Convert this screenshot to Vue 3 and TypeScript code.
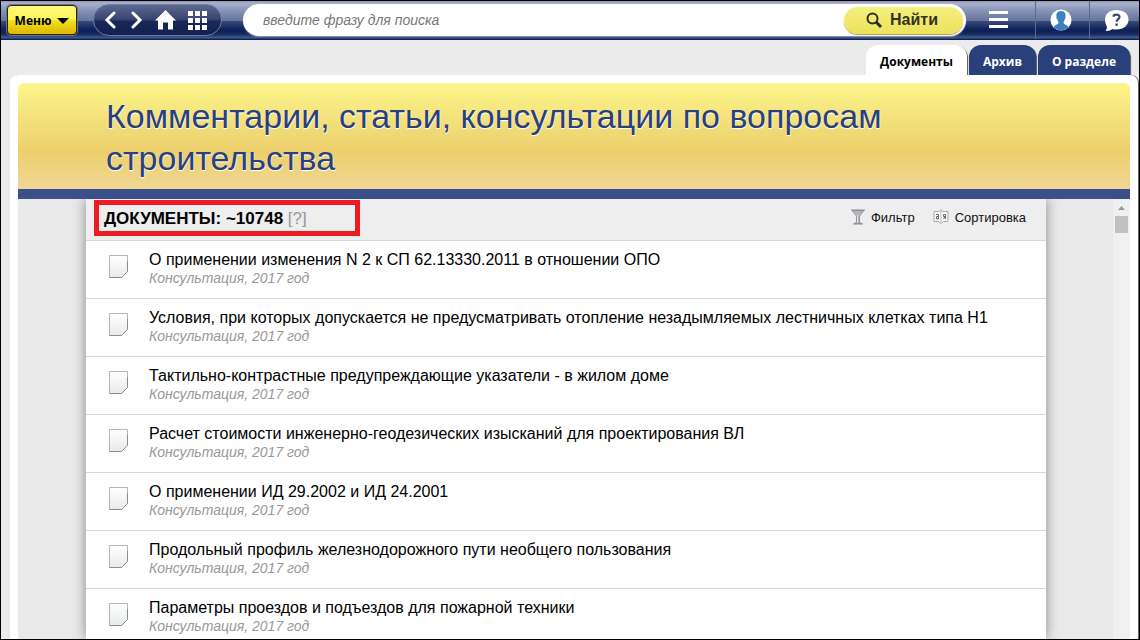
<script setup lang="ts">
import { ref } from 'vue'

interface Doc {
  title: string
  note: string
}

const query = ref('')
const tabs: string[] = ['Документы', 'Архив', 'О разделе']
const activeTab = ref(0)
const note = 'Консультация, 2017 год'
const docs: Doc[] = [
  'О применении изменения N 2 к СП 62.13330.2011 в отношении ОПО',
  'Условия, при которых допускается не предусматривать отопление незадымляемых лестничных клетках типа Н1',
  'Тактильно-контрастные предупреждающие указатели - в жилом доме',
  'Расчет стоимости инженерно-геодезических изысканий для проектирования ВЛ',
  'О применении ИД 29.2002 и ИД 24.2001',
  'Продольный профиль железнодорожного пути необщего пользования',
  'Параметры проездов и подъездов для пожарной техники',
].map((title) => ({ title, note }))
</script>

<template>
  <div class="app">
    <header class="topbar">
      <button class="menu" type="button">
        Меню
        <svg width="12" height="7" viewBox="0 0 12 7" aria-hidden="true"><path d="M0 1H12L6 7Z" fill="#000" /></svg>
      </button>
      <nav class="pill" aria-label="Навигация">
        <button type="button" aria-label="Назад">
          <svg width="12" height="18" viewBox="0 0 12 18"><path d="M10 2L3 9L10 16" fill="none" stroke="#fff" stroke-width="3" stroke-linecap="round" /></svg>
        </button>
        <button type="button" aria-label="Вперёд">
          <svg width="12" height="18" viewBox="0 0 12 18"><path d="M2 2L9 9L2 16" fill="none" stroke="#fff" stroke-width="3" stroke-linecap="round" /></svg>
        </button>
        <button type="button" aria-label="Домой">
          <svg width="21" height="20" viewBox="0 0 21 20"><path d="M10.500 0L21 10.500H18V19.500H13V12.500H8V19.500H3V10.500H0Z" fill="#fff" /></svg>
        </button>
        <button type="button" aria-label="Разделы">
          <svg width="19" height="19" viewBox="0 0 19 19"><path d="M0 0h5v5H0zM7 0h5v5H7zM14 0h5v5h-5zM0 7h5v5H0zM7 7h5v5H7zM14 7h5v5h-5zM0 14h5v5H0zM7 14h5v5H7zM14 14h5v5h-5z" fill="#fff" /></svg>
        </button>
      </nav>
      <form class="search" role="search" @submit.prevent>
        <input v-model="query" type="text" aria-label="Поиск" placeholder="введите фразу для поиска" />
        <button type="submit" class="find">
          <svg width="17" height="17" viewBox="0 0 17 17" aria-hidden="true"><circle cx="6.500" cy="6.500" r="5" fill="none" stroke="#2c2c20" stroke-width="2" /><path d="M10 10L15 15" stroke="#2c2c20" stroke-width="3" /></svg>
          Найти
        </button>
      </form>
      <div class="tools">
        <button type="button" aria-label="Список">
          <svg width="19" height="18" viewBox="0 0 19 18"><path d="M0 0h19v3H0zM0 7h19v3H0zM0 14h19v3H0z" fill="#fff" /></svg>
        </button>
        <button type="button" aria-label="Профиль">
          <svg width="22" height="22" viewBox="0 0 22 22"><circle cx="11" cy="11" r="10.500" fill="#fff" /><path d="M11 2C7 2 6 5 6.500 8C6.200 9 6.800 10.200 7.400 10.600C7.800 12 8.500 13 8.500 14C8 15.500 5 16 3.300 18Q6.500 21.300 11 21.300T18.700 18C17 16 14 15.500 13.500 14C13.500 13 14.200 12 14.600 10.600C15.200 10.200 15.800 9 15.500 8C16 5 15 2 11 2Z" fill="#3b80bf" /></svg>
        </button>
        <button type="button" aria-label="Справка">
          <svg width="25" height="23" viewBox="0 0 25 23"><path d="M12.500 1C5.500 1 1 5 1 10.500C1 14 2.500 16.500 3 18Q3 20.500 1.500 22Q6 22.300 8.500 20Q10 20.500 12.500 20.500C19.500 20.500 24.500 16.500 24.500 10.500S19.500 1 12.500 1Z" fill="#fff" /><path d="M9.500 7.800C9.500 4.900 15.500 4.700 15.500 8C15.500 10 12.600 10.300 12.600 12.800" fill="none" stroke="#3d4972" stroke-width="2.200" /><path d="M11.400 14.500h2.400v2.400h-2.400z" fill="#3d4972" /></svg>
        </button>
      </div>
    </header>

    <nav class="tabs" role="tablist">
      <button
        v-for="(tab, i) in tabs"
        :key="tab"
        type="button"
        role="tab"
        class="tab"
        :class="{ active: i === activeTab }"
        :aria-selected="i === activeTab"
        @click="activeTab = i"
      >
        {{ tab }}
      </button>
    </nav>

    <main class="panel">
      <div class="banner">
        <h1>Комментарии, статьи, консультации по вопросам строительства</h1>
      </div>
      <div class="body">
        <section class="sheet">
          <div class="listhead">
            <h2>ДОКУМЕНТЫ: ~10748 <a href="#">[?]</a></h2>
            <div class="actions">
              <button type="button">
                <svg width="14" height="16" viewBox="0 0 14 16" aria-hidden="true"><path d="M1 1.500L5.500 7V13.500L3 14.500H11L8.500 13.500V7L13 1.500Z" fill="#b4b4ba" stroke="#97979b" /><path d="M0 1h14M2 15h10" stroke="#88888c" /><path d="M6.500 6v8" stroke="#e6e6ea" /></svg>
                Фильтр
              </button>
              <button type="button">
                <svg width="16" height="16" viewBox="0 0 16 16" aria-hidden="true"><path d="M1 2.500H6L8 .8L10 2.500H15V12.500H10L8 14.800L6 12.500H1Z" fill="#f8f8f8" stroke="#aaa" /><path d="M8 2v11" stroke="#bbb" /><path d="M3 5.500h2.500V10H3.500V7.500H5.500M12.500 10V5.500H10.500V7.500H12.500M12 7.500L10.500 10" fill="none" stroke="#666" /></svg>
                Сортировка
              </button>
            </div>
          </div>
          <ul>
            <li v-for="doc in docs" :key="doc.title">
              <svg class="page" width="20" height="24" viewBox="0 0 20 24" aria-hidden="true">
                <defs><linearGradient id="paper" x1="0" y1="0" x2="0" y2="1"><stop offset="0" stop-color="#fff" /><stop offset="1" stop-color="#e8eaea" /></linearGradient></defs>
                <path d="M.5 .5H18.500V16.500L12.500 22.500H.5Z" fill="url(#paper)" stroke="#b5b5b5" />
                <path d="M18.500 6V16.500L12.500 22.500H.5" fill="none" stroke="#8c8c8c" />
              </svg>
              <div class="text">
                <a href="#">{{ doc.title }}</a>
                <p>{{ doc.note }}</p>
              </div>
            </li>
          </ul>
        </section>
        <div class="scroll" aria-hidden="true">
          <svg width="7" height="4" viewBox="0 0 7 4"><path d="M3.500 0L7 4H0Z" fill="#999" /></svg>
          <div class="thumb"></div>
        </div>
      </div>
    </main>
  </div>
</template>

<style>
body {
  margin: 0;
  overflow: hidden;
}
</style>

<style scoped>
.app {
  box-sizing: border-box;
  height: 100vh;
  display: flex;
  flex-direction: column;
  overflow: hidden;
  border: 1px solid #000;
  background: #ebebeb;
  font-family: "Liberation Sans", Arial, sans-serif;
}
button {
  display: flex;
  align-items: center;
  border: 0;
  padding: 0;
  background: none;
  cursor: pointer;
}
.topbar {
  box-sizing: border-box;
  flex: none;
  height: 39px;
  display: flex;
  align-items: center;
  padding: 0 0 1px 6px;
  background: linear-gradient(#8990b0 0, #a9b1cf 2px, #8592b6 10px, #66749c 20px, #3a4c7c 20px, #0d2057 29px, #142960 33px, #485d8e 37px, #0d2355 38px);
}
.menu {
  box-sizing: border-box;
  width: 70px;
  height: 30px;
  justify-content: center;
  gap: 6px;
  border: 1px solid #2e2600;
  border-radius: 4px;
  background: linear-gradient(#fdf87c, #fdf45a 48%, #f2df20 52%, #dcb800);
  box-shadow: 0 0 0 1px #6d7080;
  color: #000;
  font: bold 12px "Open Sans", sans-serif;
}
.pill {
  box-sizing: border-box;
  width: 129px;
  height: 32px;
  display: flex;
  align-items: center;
  margin-left: 16px;
  padding-left: 10px;
  border: 1px solid #6d7ba4;
  border-radius: 16px;
  background: linear-gradient(#5d6990, #36446f 48%, #192a5a 54%, #0f204e);
}
.pill button:nth-child(2) { margin-left: 15px; }
.pill button:nth-child(3) { margin-left: 12px; }
.pill button:nth-child(4) { margin-left: 12px; }
.search {
  flex: 1;
  height: 32px;
  display: flex;
  align-items: center;
  margin-left: 21px;
  border-radius: 16px;
  background: #fff;
  box-shadow: 0 1px 1px #8b96b5;
}
.search input {
  flex: 1;
  min-width: 0;
  padding: 0 20px;
  border: 0;
  outline: 0;
  background: none;
  font: italic 14px "Liberation Sans", Arial, sans-serif;
}
.search input::placeholder { color: #777; }
.find {
  box-sizing: border-box;
  width: 119px;
  height: 27px;
  gap: 7px;
  margin-right: 3px;
  padding-left: 22px;
  border-radius: 14px;
  background: linear-gradient(#f5ef7d, #ebe35c);
  box-shadow: 0 1px 1px #a59d4a;
  color: #33331f;
  font: bold 16px "Liberation Sans", Arial, sans-serif;
}
.tools {
  height: 100%;
  display: flex;
}
.tools button {
  box-sizing: border-box;
  width: 54px;
  justify-content: center;
  padding-right: 4px;
  border-left: 1px solid #5d6a93;
}
.tools button:first-child {
  width: 69px;
  border-left: 0;
}
.tools button:last-child {
  width: 50px;
  padding: 0 0 0 4px;
}
.tabs {
  flex: none;
  display: flex;
  justify-content: flex-end;
  gap: 2px;
  padding: 5px 9px 0;
}
.tab {
  height: 30px;
  padding: 3px 14px 0;
  border-radius: 12px 12px 0 0;
  background: #29407a;
  box-shadow: 1px 1px 1px #555;
  color: #fff;
  font: bold 12px "Open Sans", sans-serif;
}
.tab.active {
  background: #fff;
  color: #000;
}
.panel {
  flex: 1;
  min-height: 0;
  display: flex;
  flex-direction: column;
  position: relative;
  margin: 0 1px 0 9px;
  padding: 8px 8px 0;
  border-radius: 8px 8px 0 0;
  background: #fff;
  box-shadow: 1px 0 0 #666;
}
.banner {
  flex: none;
  padding: 12px 88px 10px;
  border-bottom: 10px solid #39508a;
  border-radius: 6px 6px 0 0;
  background: linear-gradient(#fdf58c, #eccf6c 65%, #f0d795);
}
h1 {
  margin: 0;
  color: #29407a;
  font-size: 34px;
  font-weight: 400;
  line-height: 42px;
  text-shadow: 0 1px 1px #fff, 1px 1px 0 #fff8;
}
.body {
  flex: 1;
  min-height: 0;
  display: flex;
  justify-content: space-between;
  overflow: hidden;
  background: #e9e9e9;
}
.sheet {
  flex: 1;
  min-width: 0;
  margin: 0 67px 0 68px;
  background: #fff;
  box-shadow: 0 0 12px #888;
}
.listhead {
  box-sizing: border-box;
  height: 42px;
  display: flex;
  align-items: flex-start;
  justify-content: space-between;
  padding: 1px 20px 0 8px;
  border-bottom: 1px solid #d9d9d9;
  background: #eee;
}
h2 {
  box-sizing: border-box;
  width: 266px;
  height: 36px;
  margin: 0;
  padding-left: 5px;
  border: 5px solid #ed1c24;
  font-size: 17px;
  line-height: 28px;
}
h2 a {
  color: #999;
  font-weight: 400;
  text-decoration: none;
}
.actions {
  display: flex;
  gap: 18px;
  padding-top: 9px;
}
.actions button {
  gap: 6px;
  color: #111;
  font: 13px "Liberation Sans", Arial, sans-serif;
}
ul {
  margin: 0;
  padding: 0;
  list-style: none;
}
li {
  box-sizing: border-box;
  height: 58px;
  display: flex;
  gap: 20px;
  padding: 8px 0 0 23px;
  border-bottom: 1px solid #d9d9d9;
}
.page {
  flex: none;
  margin-top: 6px;
}
.text {
  padding-top: 1px;
}
li a {
  display: block;
  color: #000;
  font-size: 16px;
  line-height: 20px;
  text-decoration: none;
}
li p {
  margin: 0;
  color: #999;
  font-size: 14px;
  font-style: italic;
  line-height: 17px;
}
.scroll {
  width: 17px;
  display: flex;
  flex-direction: column;
  align-items: center;
  gap: 6px;
  padding-top: 7px;
  box-sizing: border-box;
  background: #f0f0f0;
}
.thumb {
  width: 13px;
  height: 17px;
  background: #c1c1c1;
}
</style>
